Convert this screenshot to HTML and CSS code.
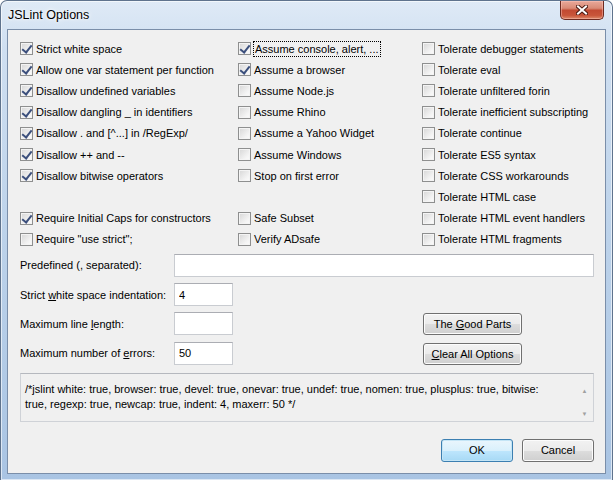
FILE: index.html
```html
<!DOCTYPE html>
<html lang="en">
<head>
  <meta charset="UTF-8" />
  <title>JSLint Options</title>
  <link rel="stylesheet" href="styles.css">
</head>
<body>
<div class="window">
  <div class="titlebar">
    <span class="title">JSLint Options</span>
    <button class="close" title="Close">
      <svg width="12" height="10" viewBox="0 0 12 10">
        <path d="M2 1.5 L10 8.5 M10 1.5 L2 8.5" stroke="#4a1a12" stroke-width="4" stroke-linecap="square" fill="none"/>
        <path d="M2 1.5 L10 8.5 M10 1.5 L2 8.5" stroke="#fff" stroke-width="2" stroke-linecap="square" fill="none"/>
      </svg>
    </button>
  </div>
  <div class="client">
    <div class="options">
      <div class="col">
        <label class="opt"><input type="checkbox" checked> Strict white space</label>
        <label class="opt"><input type="checkbox" checked> Allow one var statement per function</label>
        <label class="opt"><input type="checkbox" checked> Disallow undefined variables</label>
        <label class="opt"><input type="checkbox" checked> Disallow dangling _ in identifiers</label>
        <label class="opt"><input type="checkbox" checked> Disallow . and [^...] in /RegExp/</label>
        <label class="opt"><input type="checkbox" checked> Disallow ++ and --</label>
        <label class="opt"><input type="checkbox" checked> Disallow bitwise operators</label>
        <div class="spacer"></div>
        <label class="opt"><input type="checkbox" checked> Require Initial Caps for constructors</label>
        <label class="opt"><input type="checkbox"> Require "use strict";</label>
      </div>
      <div class="col">
        <label class="opt"><input type="checkbox" checked> <span class="focus">Assume console, alert, ...</span></label>
        <label class="opt"><input type="checkbox" checked> Assume a browser</label>
        <label class="opt"><input type="checkbox"> Assume Node.js</label>
        <label class="opt"><input type="checkbox"> Assume Rhino</label>
        <label class="opt"><input type="checkbox"> Assume a Yahoo Widget</label>
        <label class="opt"><input type="checkbox"> Assume Windows</label>
        <label class="opt"><input type="checkbox"> Stop on first error</label>
        <div class="spacer"></div>
        <label class="opt"><input type="checkbox"> Safe Subset</label>
        <label class="opt"><input type="checkbox"> Verify ADsafe</label>
      </div>
      <div class="col">
        <label class="opt"><input type="checkbox"> Tolerate debugger statements</label>
        <label class="opt"><input type="checkbox"> Tolerate eval</label>
        <label class="opt"><input type="checkbox"> Tolerate unfiltered forin</label>
        <label class="opt"><input type="checkbox"> Tolerate inefficient subscripting</label>
        <label class="opt"><input type="checkbox"> Tolerate continue</label>
        <label class="opt"><input type="checkbox"> Tolerate ES5 syntax</label>
        <label class="opt"><input type="checkbox"> Tolerate CSS workarounds</label>
        <label class="opt"><input type="checkbox"> Tolerate HTML case</label>
        <label class="opt"><input type="checkbox"> Tolerate HTML event handlers</label>
        <label class="opt"><input type="checkbox"> Tolerate HTML fragments</label>
      </div>
    </div>

    <div class="fields">
      <label class="field-label" for="predef">Predefined (, separated):</label>
      <input class="text wide" id="predef" type="text" value="">

      <label class="field-label" for="indent">Strict <u>w</u>hite space indentation:</label>
      <input class="text" id="indent" type="text" value="4">

      <label class="field-label" for="maxlen">Maximum line <u>l</u>ength:</label>
      <input class="text" id="maxlen" type="text" value="">
      <button class="btn side">The <u>G</u>ood Parts</button>

      <label class="field-label" for="maxerr">Maximum number of <u>e</u>rrors:</label>
      <input class="text" id="maxerr" type="text" value="50">
      <button class="btn side"><u>C</u>lear All Options</button>
    </div>

    <div class="preview">
      <div class="preview-text">/*jslint white: true, browser: true, devel: true, onevar: true, undef: true, nomen: true, plusplus: true, bitwise: true, regexp: true, newcap: true, indent: 4, maxerr: 50 */</div>
      <div class="scroll">
        <span class="arrow">&#9650;</span>
        <span class="arrow">&#9660;</span>
      </div>
    </div>

    <div class="actions">
      <button class="btn default">OK</button>
      <button class="btn">Cancel</button>
    </div>
  </div>
</div>
</body>
</html>
```

FILE: styles.css
```css
* {
  box-sizing: border-box;
}
body {
  margin: 0;
  font-family: 'Liberation Sans', Arial, sans-serif;
  font-size: 11px;
  color: #000;
  background: #fff;
}
.window {
  width: 613px;
  height: 480px;
  display: flex;
  flex-direction: column;
  border: 1px solid #5f738d;
  border-bottom: none;
  border-radius: 7px 7px 0 0;
  background: linear-gradient(to bottom, #dfeaf6 0%, #cfdff1 10%, #bcd2ea 50%, #a9c4e3 100%);
  box-shadow: inset 0 0 0 1px rgba(255, 255, 255, 0.6);
}
.titlebar {
  height: 28px;
  display: flex;
  align-items: flex-start;
  justify-content: space-between;
  padding-left: 7px;
}
.title {
  font-size: 12.5px;
  line-height: 28px;
  text-shadow: 0 0 6px #fff, 0 0 3px #fff;
}
.close {
  width: 44px;
  height: 19px;
  margin-right: 8px;
  padding: 0;
  border: 1px solid #6d2a20;
  border-top: none;
  border-radius: 0 0 5px 5px;
  background: linear-gradient(to bottom, #e9a99a 0%, #d98a76 40%, #c24a32 52%, #c9553a 80%, #dc8a6a 100%);
  box-shadow: inset 0 0 0 1px rgba(255, 200, 190, 0.45);
  display: flex;
  align-items: center;
  justify-content: center;
}
.client {
  flex: 1;
  margin: 0 6px 6px;
  border: 1px solid #7a8ea9;
  background: #f0f0f0;
  padding: 8px 11px 0 12px;
  display: flex;
  flex-direction: column;
}
.options {
  display: grid;
  grid-template-columns: 218px 184px 1fr;
}
.col {
  display: flex;
  flex-direction: column;
}
.opt,
.spacer {
  height: 21.2px;
}
.opt {
  display: flex;
  align-items: center;
  gap: 2px;
  white-space: nowrap;
}
.opt input {
  -webkit-appearance: none;
  appearance: none;
  width: 13px;
  height: 13px;
  margin: 0 1px 0 0;
  border: 1px solid #8e8f8f;
  background: linear-gradient(135deg, #d6d6d6 0%, #f4f4f4 70%, #fcfcfc 100%);
  box-shadow: inset 0 0 0 1px #f4f4f4;
  position: relative;
  flex: none;
}
.opt input:checked::after {
  content: "";
  position: absolute;
  left: 3px;
  top: 0px;
  width: 4px;
  height: 8px;
  border-right: 2px solid #3b4f7c;
  border-bottom: 2px solid #3b4f7c;
  transform: rotate(38deg);
}
.focus {
  outline: 1px dotted #000;
  outline-offset: 1px;
  margin-left: 1px;
}
.fields {
  margin-top: 4px;
  display: grid;
  grid-template-columns: 154px 59px 190px 99px 1fr;
  grid-auto-rows: 23px;
  row-gap: 6.3px;
  align-items: center;
}
.field-label {
  grid-column: 1;
}
.text {
  grid-column: 2;
  height: 23px;
  border: 1px solid #c9ccd1;
  border-top-color: #abadb3;
  background: #fff;
  font: inherit;
  padding: 0 4px;
  outline: none;
}
.text.wide {
  grid-column: 2 / -1;
}
.btn {
  font: inherit;
  color: #000;
  height: 22px;
  padding: 0;
  border: 1px solid #707070;
  border-radius: 3px;
  background: linear-gradient(to bottom, #f2f2f2 0%, #ebebeb 50%, #dddddd 51%, #cfcfcf 100%);
  box-shadow: inset 0 0 0 1px #fcfcfc;
}
.btn.side {
  grid-column: 4;
  align-self: end;
}
.preview {
  margin-top: 8px;
  height: 49px;
  display: flex;
  border: 1px solid #cfd2d7;
  border-top-color: #b5b8be;
  background: #f0f0f0;
}
.preview-text {
  flex: 1;
  padding: 8px 18px 0 4px;
  line-height: 15px;
}
.scroll {
  width: 17px;
  display: flex;
  flex-direction: column;
  justify-content: space-between;
  align-items: center;
  padding: 13px 0 3px;
}
.arrow {
  font-size: 6px;
  color: #a0a0a0;
  line-height: 8px;
}
.actions {
  margin-top: 17px;
  display: flex;
  justify-content: flex-end;
  gap: 9px;
}
.actions .btn {
  width: 72px;
  height: 23px;
}
.btn.default {
  border-color: #3c7fb1;
  background: linear-gradient(to bottom, #eaf6fd 0%, #d9f0fc 50%, #bee6fd 51%, #a7d9f5 100%);
  box-shadow: inset 0 0 0 1px #c4e5f6;
}
```
